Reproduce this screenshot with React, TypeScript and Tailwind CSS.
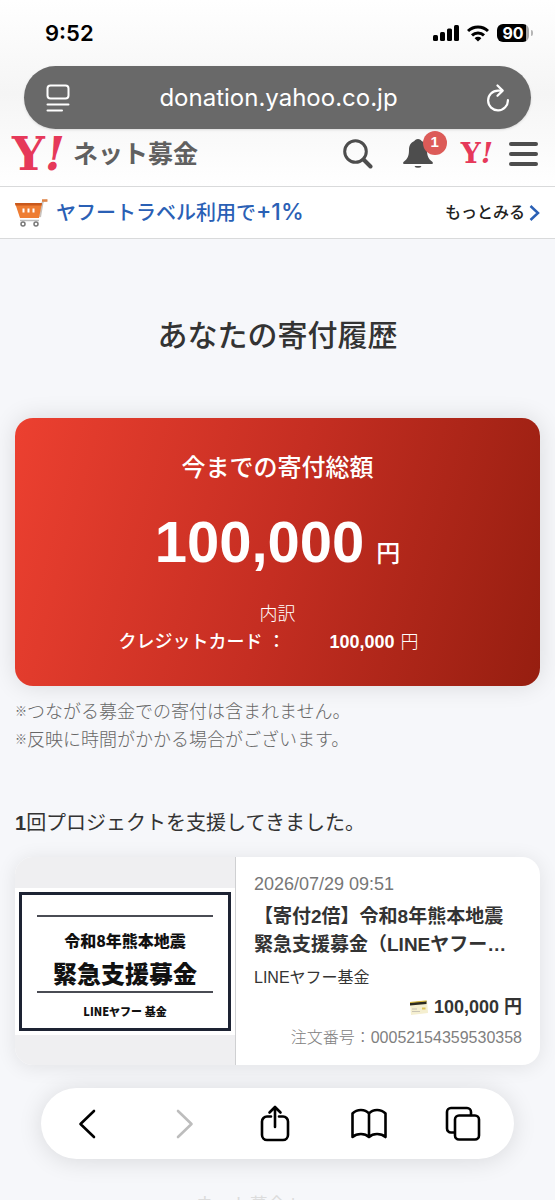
import { ReactNode } from "react";

function YahooMark({ size }: { size: "lg" | "sm" }) {
  return (
    <span
      className={
        size === "lg"
          ? "flex items-center font-['DejaVu_Serif'] text-[46px] leading-[32px] font-bold text-[#e6395a]"
          : "flex items-center font-['DejaVu_Serif'] text-[28px] leading-[20px] font-bold text-[#e6395a]"
      }
    >
      Y<span className="italic">!</span>
    </span>
  );
}

function StatusBar() {
  return (
    <div className="flex h-[66px] items-center justify-between pr-[22px] pl-[45px] font-['Inter',sans-serif] text-black">
      <time className="text-[22px] font-semibold">9:52</time>
      <div className="flex items-center gap-2">
        <svg width="26" height="16" viewBox="0 0 26 16" fill="currentColor">
          <rect x="0" y="10" width="5" height="6" rx="1.5" />
          <rect x="7" y="7" width="5" height="9" rx="1.5" />
          <rect x="14" y="3.5" width="5" height="12.5" rx="1.5" />
          <rect x="21" y="0" width="5" height="16" rx="1.5" />
        </svg>
        <svg width="22" height="17" viewBox="0 0 22 17" fill="none" stroke="currentColor" strokeWidth="3">
          <path d="M1 6a14.5 14.5 0 0 1 20 0" />
          <path d="M5 10.4a8.7 8.7 0 0 1 12 0" />
          <path d="M11 16.6 7.6 13.2a4.8 4.8 0 0 1 6.8 0z" fill="currentColor" stroke="none" />
        </svg>
        <div className="flex items-center gap-[2px]">
          <div className="flex h-[18px] w-[32px] items-center justify-center rounded-[6px] bg-linear-to-r from-black from-90% to-[#a8a8a8] to-90% text-[16px] font-bold text-white">
            90
          </div>
          <div className="h-[6px] w-[2px] rounded-r bg-[#b5b5b5]" />
        </div>
      </div>
    </div>
  );
}

function AddressBar() {
  return (
    <div className="mx-6 flex h-[63px] items-center justify-between rounded-full bg-[#696969] px-[22px] text-white shadow-sm">
      <button aria-label="ページメニュー">
        <svg width="24" height="28" viewBox="0 0 24 28" fill="none" stroke="currentColor" strokeWidth="2" strokeLinecap="round">
          <rect x="1.5" y="1.5" width="21" height="13" rx="3" />
          <path d="M1.5 20.5h21M1.5 26.5h14.5" />
        </svg>
      </button>
      <span className="font-['Inter',sans-serif] text-[24px]">donation.yahoo.co.jp</span>
      <button aria-label="再読み込み">
        <svg width="22" height="28" viewBox="0 0 22 28" fill="none" stroke="currentColor" strokeWidth="2.2" strokeLinecap="round" strokeLinejoin="round">
          <path d="M15 6.6H11A9.9 9.9 0 1 0 20.9 16.2" />
          <path d="m10.5 1.5 5.2 5.1-5.2 5.2" />
        </svg>
      </button>
    </div>
  );
}

function SiteHeader() {
  return (
    <header className="flex h-[58px] items-center justify-between border-b border-[#d9dadb] pr-[17px] pb-2 pl-3">
      <a href="#" className="flex items-center gap-2">
        <YahooMark size="lg" />
        <span className="text-[25px] leading-8 font-bold text-[#606060]">ネット募金</span>
      </a>
      <div className="flex items-center text-[#4d4d4d]">
        <button aria-label="検索" className="mr-[30px]">
          <svg width="30" height="30" viewBox="0 0 30 30" fill="none" stroke="currentColor" strokeWidth="3">
            <circle cx="12.5" cy="12.5" r="10.8" />
            <path d="m20.5 20.5 7 7" strokeWidth="4" strokeLinecap="round" />
          </svg>
        </button>
        <button aria-label="お知らせ" className="relative mr-[28px]">
          <svg width="30" height="30" viewBox="0 0 30 30" fill="currentColor">
            <path d="M15 0c-2 0-3 1-3.600 2C7.500 3.500 6 7 6 11c0 6-1.500 9-5 11.500-1.500 1.200-1 2.500.5 2.500h27c1.500 0 2-1.300.5-2.500C25.500 20 24 17 24 11c0-4-1.500-7.500-5.400-9C18 1 17 0 15 0z" />
            <path d="M11.500 27h7a3.600 2.400 0 0 1-7 0z" />
          </svg>
          <span className="absolute -top-2 -right-[14px] flex h-6 w-6 items-center justify-center rounded-full bg-[#dc5b58] text-[15px] font-bold text-white">
            1
          </span>
        </button>
        <a href="#" aria-label="Yahoo! JAPAN" className="mr-4">
          <YahooMark size="sm" />
        </a>
        <button aria-label="メニュー" className="flex w-[29px] flex-col gap-[6px]">
          <span className="h-1 rounded-full bg-[#4d4d4d]" />
          <span className="h-1 rounded-full bg-[#4d4d4d]" />
          <span className="h-1 rounded-full bg-[#4d4d4d]" />
        </button>
      </div>
    </header>
  );
}

function PromoBar() {
  return (
    <div className="flex h-[52px] items-center justify-between border-b border-[#d9dadb] bg-white pr-[15px] pl-[14px]">
      <a href="#" className="flex items-center text-[20px] font-medium text-[#2a60b5]">
        <svg className="mr-2" width="34" height="28" viewBox="0 0 34 28" fill="none">
          <path d="M26 18 28.500 3.500Q29 1.500 33 1.500" stroke="#c9c2bd" strokeWidth="2" />
          <path d="M28 1.500h5.500" stroke="#e08648" strokeWidth="2.500" />
          <path d="M1 4h27l-3 15H6z" fill="#ee7d33" />
          <path d="M1 4h27l-.5 2.500H1.500z" fill="#c9591c" />
          <path d="M9.500 9.500v4M14.500 9.500v4M19.500 9.500v4" stroke="#fff" strokeWidth="2" />
          <path d="M6 21.500h19" stroke="#bdbdbd" strokeWidth="1.500" />
          <circle cx="9" cy="25" r="2" stroke="#777" strokeWidth="1.500" />
          <circle cx="22" cy="25" r="2" stroke="#777" strokeWidth="1.500" />
        </svg>
        ヤフートラベル利用で
        <span className="font-['Inter',sans-serif] text-[23px]">+1%</span>
      </a>
      <a href="#" className="flex items-center gap-1 text-[16px] font-medium text-[#222]">
        もっとみる
        <svg width="11" height="16" viewBox="0 0 11 16" fill="none" stroke="#2a60b5" strokeWidth="2.500">
          <path d="m1.500 1 7.500 7-7.500 7" />
        </svg>
      </a>
    </div>
  );
}

function TotalCard() {
  return (
    <section className="rounded-[18px] bg-linear-[105deg,#ec4030_0%,#c52e22_50%,#961e10_100%] pt-[34px] pb-[30px] text-center text-white shadow-[0_0_24px_rgba(0,0,0,0.12)]">
      <h2 className="text-[24px] leading-8 font-medium">今までの寄付総額</h2>
      <p className="mt-7 text-[58px] leading-[60px] font-bold">
        100,000<span className="ml-3 text-[24px] leading-6 font-medium">円</span>
      </p>
      <p className="mt-7 text-[18px] leading-7 font-light">内訳</p>
      <dl className="flex justify-center pr-[18px] text-[18px] leading-7">
        <dt className="font-medium">クレジットカード ：</dt>
        <dd className="ml-11 font-light">
          <strong className="mr-[6px] font-bold">100,000</strong>円
        </dd>
      </dl>
    </section>
  );
}

function Note({ children }: { children: ReactNode }) {
  return (
    <li className="flex items-center">
      <span className="text-[12px] font-normal">※</span>
      {children}
    </li>
  );
}

function ProjectBanner() {
  return (
    <div className="w-full bg-white p-1">
      <div className="flex h-[139px] flex-col border-[3px] border-[#1d2333] px-[15px] pt-5 text-center font-['Noto_Sans_CJK_JP',sans-serif] font-black text-[#111]">
        <div className="border-y-2 border-[#4a4c54] pt-2">
          <p className="text-[16px] leading-[30px]">令和8年熊本地震</p>
          <p className="text-[24px] leading-[36px]">緊急支援募金</p>
        </div>
        <p className="mt-2 text-[11px] leading-5">LINEヤフー 基金</p>
      </div>
    </div>
  );
}

function DonationCard() {
  return (
    <article className="flex overflow-hidden rounded-[18px] bg-white shadow-[0_2px_20px_rgba(0,0,0,0.09)]">
      <div className="flex w-[221px] shrink-0 items-center border-r border-[#cfd0d2] bg-[#efeff1]">
        <ProjectBanner />
      </div>
      <div className="min-w-0 flex-1 px-[18px] py-[17px] text-[#333]">
        <time className="block text-[18px] leading-5 text-[#777]">2026/07/29 09:51</time>
        <h3 className="mt-[9px] text-[19px] leading-7 font-bold whitespace-nowrap">
          【寄付2倍】令和8年熊本地震
          <br />
          緊急支援募金（LINEヤフー…
        </h3>
        <p className="mt-[9px] text-[16px] leading-5">LINEヤフー基金</p>
        <p className="mt-[7px] flex items-center justify-end gap-[6px] text-[18px] leading-6 font-bold">
          <svg width="18" height="15" viewBox="0 0 18 15">
            <path d="M0 2 17 0l1 13-17 2z" fill="#f5efd0" />
            <path d="M0 2.500 16.500 1v3L0 5.500z" fill="#2c2a20" />
            <path d="M0 2 16.500.5v1L0 3z" fill="#d9b93a" />
            <path d="M2 9h5M2 11.500h8" stroke="#c9c4b4" />
            <path d="M12 8.500h3.500" stroke="#dfc65a" strokeWidth="2" />
          </svg>
          100,000 円
        </p>
        <p className="mt-[9px] text-right text-[16px] leading-5 font-light whitespace-nowrap text-[#808080]">
          注文番号：00052154359530358
        </p>
      </div>
    </article>
  );
}

function ToolbarButton({ label, disabled, children }: { label: string; disabled?: boolean; children: ReactNode }) {
  return (
    <button aria-label={label} disabled={disabled} className="flex justify-center text-black disabled:text-[#bdbdbd]">
      <svg width="36" height="38" viewBox="0 0 36 38" fill="none" stroke="currentColor" strokeWidth="2.6" strokeLinecap="round" strokeLinejoin="round">
        {children}
      </svg>
    </button>
  );
}

function BrowserToolbar() {
  return (
    <nav className="mx-[41px] mt-[23px] grid h-[71px] grid-cols-5 items-center rounded-full bg-white pr-1 shadow-[0_2px_24px_rgba(0,0,0,0.12)]">
      <ToolbarButton label="戻る">
        <path d="M24 6 10.500 19 24 32" />
      </ToolbarButton>
      <ToolbarButton label="進む" disabled>
        <path d="M14 6l13.500 13L14 32" />
      </ToolbarButton>
      <ToolbarButton label="共有">
        <path d="M14 11.500h-4a5 5 0 0 0-5 5V30a5 5 0 0 0 5 5h16a5 5 0 0 0 5-5V16.500a5 5 0 0 0-5-5h-4" />
        <path d="M18 22V2M12.500 7.500 18 2l5.500 5.500" />
      </ToolbarButton>
      <ToolbarButton label="ブックマーク">
        <path d="M18 8.500C14 3.800 6 3.800 1.500 8.500v23.500c4.500-4 12.500-4 16.500 0 4-4 12-4 16.500 0V8.500C30 3.800 22 3.800 18 8.500zV32" />
      </ToolbarButton>
      <ToolbarButton label="タブ">
        <path d="M9.500 27.500H6a4 4 0 0 1-4-4V7a4 4 0 0 1 4-4h16a4 4 0 0 1 4 4v3" />
        <rect x="10" y="10.500" width="24" height="24" rx="4" />
      </ToolbarButton>
    </nav>
  );
}

export default function App() {
  return (
    <div className="min-h-screen bg-[#f6f7fa] font-['Liberation_Sans','Noto_Sans_CJK_JP',sans-serif] text-[#333]">
      <div className="bg-linear-to-b from-white via-[#f5f5f5] to-white">
        <StatusBar />
        <AddressBar />
        <SiteHeader />
      </div>
      <PromoBar />
      <main className="px-[15px]">
        <h1 className="pt-[77px] pb-[62px] text-center text-[30px] leading-10 font-medium">あなたの寄付履歴</h1>
        <TotalCard />
        <ul className="mt-3 text-[18px] leading-7 font-light text-[#666]">
          <Note>つながる募金での寄付は含まれません。</Note>
          <Note>反映に時間がかかる場合がございます。</Note>
        </ul>
        <p className="mt-[55px] mb-5 text-[20px] leading-7">
          <strong className="font-bold">1</strong>回プロジェクトを支援してきました。
        </p>
        <DonationCard />
      </main>
      <BrowserToolbar />
      <footer className="mt-[34px] h-[7px] overflow-hidden pr-16 text-center text-[18px] leading-6 text-[#dcdcdc]">
        ネット募金 |
      </footer>
    </div>
  );
}
